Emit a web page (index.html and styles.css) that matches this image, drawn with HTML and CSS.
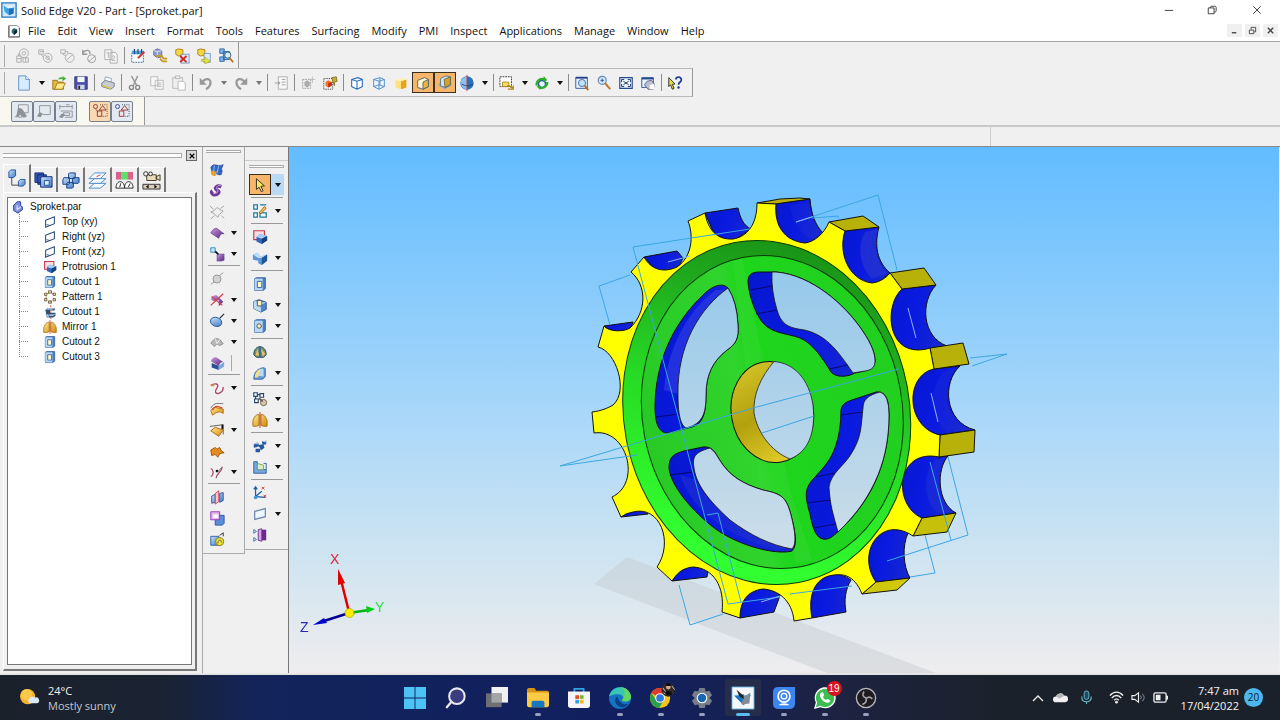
FILE: index.html
```html
<!DOCTYPE html>
<html lang="en">
<head>
<meta charset="utf-8">
<title>Solid Edge V20 - Part - [Sproket.par]</title>
<link rel="stylesheet" href="styles.css">
</head>
<body>
<svg class="defs" aria-hidden="true">
<defs>
<linearGradient id="lb" x2="1" y2="1"><stop offset="0" stop-color="#cfe6fb"/><stop offset="1" stop-color="#3f78c4"/></linearGradient>
<linearGradient id="gd" x2="1" y2="1"><stop offset="0" stop-color="#ffe98a"/><stop offset="1" stop-color="#d08a10"/></linearGradient>
<linearGradient id="pu" x2="1" y2="1"><stop offset="0" stop-color="#c99be0"/><stop offset="1" stop-color="#54217a"/></linearGradient>
</defs>
<symbol id="app" viewBox="0 0 18 18"><rect x="1" y="1" width="16" height="16" fill="#cfe8fb" stroke="#2b7cc0" stroke-width="1.5"/><path d="M3 4l5 3 7-1-1 7-5 2-5-4z" fill="#3fa4e6"/><path d="M3 4l5 3 7-1-4-2-3 1z" fill="#eaf6ff"/><path d="M9 8v7l5-2V7z" fill="#1f6fb8"/></symbol>
<symbol id="doc" viewBox="0 0 18 18"><path d="M3 2h10l3 3v11H3z" fill="#fff" stroke="#777"/><path d="M2 2v15h14V5" fill="none" stroke="#555"/><path d="M6 8l3-3 4 2v4l-4 3-3-3z" fill="#2a6a6a"/><path d="M9 9v5l4-3V7z" fill="#123"/></symbol>
<symbol id="g1" viewBox="0 0 18 18"><g fill="none" stroke="#aaa"><circle cx="10" cy="6" r="5"/><circle cx="10" cy="6" r="2"/><path d="M2 16V9h5v7zM9 16v-5h6v5zM4 9V6M2 12h5M12 11v5"/></g></symbol>
<symbol id="g2" viewBox="0 0 18 18"><g fill="none" stroke="#aaa"><circle cx="12" cy="11" r="5"/><circle cx="12" cy="11" r="2"/><path d="M2 2h5v5H2zM4 7l3 3M3 4h5M9 8l6 6"/></g></symbol>
<symbol id="g3" viewBox="0 0 18 18"><g fill="none" stroke="#aaa"><circle cx="12" cy="11" r="5"/><path d="M2 2h5v4H2zM4 7l4 2M8 14l8-7M7 4h3v2"/></g></symbol>
<symbol id="g4" viewBox="0 0 18 18"><g fill="none" stroke="#999"><circle cx="12" cy="12" r="4.5"/><path d="M9 15l7-6"/><path d="M2 2v5h5M2 6c3-5 9-4 8 1" stroke-width="1.5"/></g></symbol>
<symbol id="g5" viewBox="0 0 18 18"><g fill="#f6f6f6" stroke="#aaa"><path d="M2 2h8v11H2zM8 5h6l2 2v10H8z"/><path d="M4 6l2-1v6M10 10c3-3 5 0 0 4h4" fill="none"/></g></symbol>
<symbol id="sel" viewBox="0 0 18 18"><path d="M2 6h13v10H2z" fill="#fff" stroke="#2a5e96" stroke-dasharray="2 1"/><path d="M2 3h13v4H2z" fill="#58a6dc"/><path d="M5 1v6M9 1v6M13 1v6" stroke="#184a80" stroke-width="1.3"/><path d="M8 11l7-8 2 2-7 7z" fill="#c43d3d"/></symbol>
<symbol id="p1" viewBox="0 0 18 18"><path d="M2 3l4-2 5 2v7l-5 1-4-3z" fill="#8f9ccc" stroke="#5b669c"/><path d="M6 4v7M2 3l4 1 5-1" stroke="#e3e8ff" fill="none"/><path d="M5 9h6l2 3h4M9 12l3 3h5" fill="none" stroke="#c49a22" stroke-width="2"/></symbol>
<symbol id="p2" viewBox="0 0 18 18"><path d="M2 2l3-1 5 1v6l-5 1-3-2z" fill="#f5d83e" stroke="#a77a12"/><rect x="8" y="7" width="9" height="10" fill="#dceafa" stroke="#7796bc"/><path d="M7 9l7 7m0-7l-7 7" stroke="#d4281b" stroke-width="2"/></symbol>
<symbol id="p3" viewBox="0 0 18 18"><path d="M2 2l3-1 5 1v6l-5 1-3-2z" fill="#f5d83e" stroke="#a77a12"/><rect x="9" y="6" width="7" height="10" fill="#dceafa" stroke="#7796bc"/><path d="M6 13h4v-3l6 5-6 3v-3H6z" fill="#e4e43e" stroke="#aaa322" stroke-width=".7"/></symbol>
<symbol id="p4" viewBox="0 0 18 18"><path d="M2 1h5v5H2zM2 10h5v5H2zM6 4h7v9H6z" fill="#7fb3e8" stroke="#2c65ac"/><circle cx="11" cy="8" r="3.5" fill="#d8ecff" stroke="#356"/><path d="M13 11l4 5" stroke="#b27422" stroke-width="2"/></symbol>
<symbol id="new" viewBox="0 0 18 18"><path d="M3 1h8l4 4v12H3z" fill="#d9ecff" stroke="#5b8cc4"/><path d="M11 1v4h4" fill="#fff" stroke="#5b8cc4"/></symbol>
<symbol id="open" viewBox="0 0 18 18"><path d="M2 6h5l1 2h6v8H2z" fill="#e5b93c" stroke="#9a7414"/><path d="M4 16l3-7h9l-3 7z" fill="#ffe98a" stroke="#a07a1a"/><path d="M8 5c1-3 4-3 5-2V1l4 3-4 3V5c-2-1-3 0-5 0z" fill="#3fb02f"/></symbol>
<symbol id="save" viewBox="0 0 18 18"><path d="M2 2h14v14H3l-1-1z" fill="#4b4da8" stroke="#33347b"/><path d="M5 2h8v6H5z" fill="#f2f6ff"/><path d="M5 11h8v5H5z" fill="#cfd6ea"/><path d="M6 12h2v4H6z" fill="#222"/></symbol>
<symbol id="print" viewBox="0 0 18 18"><path d="M6 2l7 2-1 5-7-2z" fill="#fff" stroke="#8fa4be"/><path d="M2 9l4-3 10 3v4l-4 3-10-3z" fill="#c7ccd4" stroke="#73787f"/><path d="M3 12l9 3" stroke="#e3c53d" stroke-width="1.5"/></symbol>
<symbol id="cut" viewBox="0 0 18 18"><path d="M5 1l6 11M12 1L7 12" stroke="#999" stroke-width="1.6"/><circle cx="5" cy="14" r="2.3" fill="none" stroke="#888" stroke-width="1.5"/><circle cx="12" cy="14" r="2.3" fill="none" stroke="#888" stroke-width="1.5"/></symbol>
<symbol id="copy" viewBox="0 0 18 18"><g fill="#f8f8f8" stroke="#b5b5b5"><path d="M2 2h8v10H2zM7 6h9v10H7z"/><path d="M9 9h5M9 11h5M9 13h5"/></g></symbol>
<symbol id="paste" viewBox="0 0 18 18"><g fill="#efefef" stroke="#b5b5b5"><path d="M2 3h11v12H2z"/><path d="M5 1h5v3H5z"/><path d="M8 7h6l2 2v8H8z" fill="#fff"/></g></symbol>
<symbol id="undo" viewBox="0 0 18 18"><path d="M5 8C8 3 15 4 14 9c0 3-2 5-5 7" fill="none" stroke="#999" stroke-width="2.6"/><path d="M2 3v8h8z" fill="#999"/></symbol>
<symbol id="redo" viewBox="0 0 18 18"><path d="M13 8C10 3 3 4 4 9c0 3 2 5 5 7" fill="none" stroke="#999" stroke-width="2.6"/><path d="M16 3v8H8z" fill="#999"/></symbol>
<symbol id="ins" viewBox="0 0 18 18"><path d="M6 2h10v14H6z" fill="#f7f7f7" stroke="#aaa"/><path d="M2 9h6M6 7l2 2-2 2M10 5h4M10 8h4M10 11h4" stroke="#999" fill="none"/></symbol>
<symbol id="gs" viewBox="0 0 18 18"><path d="M3 5h9v10H3z" fill="none" stroke="#999" stroke-dasharray="2 1"/><path d="M5 8l3-2 3 2v4l-3 2-3-2z" fill="#aaa"/><path d="M14 2v7M11 5h6" stroke="#bbb"/></symbol>
<symbol id="os" viewBox="0 0 18 18"><path d="M2 4h10v12H2z" fill="none" stroke="#222" stroke-dasharray="1 1"/><path d="M4 8l3-2 4 2v4l-4 2-3-2z" fill="#f07a1c"/><path d="M7 14V9l4-1v4z" fill="#c22b1b"/><path d="M11 3l5-1 1 5-3 1v4l-2-5z" fill="#c7ae30" stroke="#847420"/></symbol>
<symbol id="wire" viewBox="0 0 18 18"><path d="M3 5l7-2 5 2v8l-6 3-6-3zM3 5l6 2 6-2M9 7v9" fill="#fff" stroke="#2c6fbb" stroke-width="1.2"/></symbol>
<symbol id="wire2" viewBox="0 0 18 18"><path d="M3 5l7-2 5 2v8l-6 3-6-3zM3 5l6 2 6-2M9 7v9M3 13l6-2 6 2M10 3v8" fill="#eef6ff" stroke="#4186cb"/></symbol>
<symbol id="shade" viewBox="0 0 18 18"><path d="M3 6l8-3 4 2v9l-6 2-6-2z" fill="#ffe27c"/><path d="M9 7l6-2v9l-6 2z" fill="#e6a61c"/><path d="M3 6l8-3 4 2-6 2z" fill="#fff2b8"/></symbol>
<symbol id="sedge" viewBox="0 0 18 18"><path d="M3 6l8-3 4 2v8l-6 3-6-2z" fill="#fff7cf" stroke="#4f6175"/><path d="M9 8l6-3v8l-6 3z" fill="#e8b838" stroke="#4f6175"/></symbol>
<symbol id="floor" viewBox="0 0 18 18"><path d="M2 12l7 4 7-4v-3H2z" fill="#9aa9b8"/><path d="M4 4l6-3 5 1v9l-6 3-5-2z" fill="#d6e6ee" stroke="#53708c"/><path d="M8 5l7-3v9l-6 3z" fill="#dba01e" stroke="#5a6a50"/></symbol>
<symbol id="ball" viewBox="0 0 18 18"><circle cx="9" cy="9" r="7.500" fill="#2f6fb5"/><path d="M9 2v14a7 7 0 010-14z" fill="#8ec2ee"/><path d="M3 10c4 3 9 3 13 0" fill="none" stroke="#123e77"/><path d="M9 0v18" stroke="#cc3131"/></symbol>
<symbol id="sketchv" viewBox="0 0 18 18"><path d="M1 2h13v11H1z" fill="#fff" stroke="#222" stroke-dasharray="2 1"/><path d="M4 8h7v5H4z" fill="#ffe063" stroke="#a88212"/><path d="M9 13c3-4 4 4 7 0v3h-6" fill="none" stroke="#b08412" stroke-width="1.4"/></symbol>
<symbol id="rot" viewBox="0 0 18 18"><circle cx="9" cy="10" r="4" fill="#e6f1ff" stroke="#2c5fa0" stroke-width="1.8"/><path d="M3 12C2 6 8 3 12 5M15 8c0 5-5 8-9 6" fill="none" stroke="#2fae2a" stroke-width="2.4"/><path d="M11 1l4 5-5 2zM7 11v6l-4-4z" fill="#2fae2a"/></symbol>
<symbol id="zarea" viewBox="0 0 18 18"><path d="M2 3h13v12H2z" fill="#eaf3ff" stroke="#2a4f8f"/><path d="M2 3h13" stroke="#1d3f86" stroke-width="2"/><circle cx="9" cy="9" r="4" fill="#c3e2fb" stroke="#37679b"/><path d="M12 12l4 5" stroke="#c06a1c" stroke-width="2"/></symbol>
<symbol id="zoomi" viewBox="0 0 18 18"><circle cx="7" cy="6" r="4.500" fill="#d6e9fb" stroke="#6388b4" stroke-width="1.3"/><path d="M5 6h4M7 4v4" stroke="#2a4f8f"/><path d="M10 9l6 7" stroke="#c4762c" stroke-width="2.200"/></symbol>
<symbol id="fit" viewBox="0 0 18 18"><path d="M2 3h14v12H2z" fill="#eef5ff" stroke="#244b8c" stroke-width="1.3"/><path d="M6 7l6 4M12 7l-6 4M4 8V5h3M11 5h3v3M14 10v3h-3M7 13H4v-3" fill="none" stroke="#122b5a"/></symbol>
<symbol id="pan" viewBox="0 0 18 18"><path d="M2 3h13v11H2z" fill="#eaf3ff" stroke="#244b8c"/><path d="M2 4h13" stroke="#244b8c" stroke-width="2"/><path d="M5 11l3-4 5-1 3 4-1 6H9z" fill="#b9c0d4" stroke="#5a627c"/><path d="M11 11l5-1v6h-5z" fill="#fff"/></symbol>
<symbol id="help" viewBox="0 0 18 18"><path d="M2 3l7 7-3 .5L8 15l-2 1-2-5-2 2z" fill="#e5de3c" stroke="#222"/><path d="M10 5c0-4 7-3 6 1 0 2-3 2-3 5" fill="none" stroke="#1d3f9c" stroke-width="2"/><circle cx="13" cy="14" r="1.400" fill="#1d3f9c"/></symbol>
<symbol id="r1" viewBox="0 0 18 18"><path d="M5 2h11v9H9v5H5z" fill="#e9ecef" stroke="#8a8f94"/><path d="M1 16l5-5M5 6l4 1 5 8-3 1-4-3-4 3z" fill="#8d9297" stroke="#8d9297"/></symbol>
<symbol id="r2" viewBox="0 0 18 18"><path d="M4 3h12v10H8" fill="none" stroke="#8a8f94"/><path d="M4 3v8" stroke="#8a8f94"/><path d="M1 15l3-5 4 2-3 4z" fill="#8d9297"/></symbol>
<symbol id="r3" viewBox="0 0 18 18"><path d="M2 2v5M2 4h14M16 2v5M9 2h4M3 9h13v7H8M6 11h7v3H6z" fill="none" stroke="#8a8f94"/><path d="M1 16l3-4 4 1-3 4z" fill="#8d9297"/></symbol>
<symbol id="r4" viewBox="0 0 18 18"><g fill="none" stroke="#8a3426"><circle cx="4" cy="4" r="2.300"/><path d="M8 8l4-5 4 5zM6 9h5v6H6zM4 7l3 3"/></g><path d="M9 2h8v13H12" fill="none" stroke="#5a3020" stroke-dasharray="1 1.500"/></symbol>
<symbol id="r5" viewBox="0 0 18 18"><g fill="none" stroke="#2a4590"><circle cx="4" cy="4" r="2.300"/><path d="M8 8l4-5 4 5z" stroke="#8a3426"/><path d="M6 9h5v6H6z" stroke="#b42a2a"/></g><path d="M9 2h8v13H12" fill="none" stroke="#234" stroke-dasharray="1 1.500"/></symbol>
<!-- pathfinder tabs -->
<symbol id="t1" viewBox="0 0 20 20"><path d="M5 9v8h7" fill="none" stroke="#444"/><path d="M2 3l2-2h5v6l-2 2H2z" fill="url(#lb)" stroke="#24569c"/><path d="M12 13l2-2h5v5l-2 2h-5z" fill="url(#lb)" stroke="#24569c"/></symbol>
<symbol id="t2" viewBox="0 0 20 20"><path d="M1 2h9v10H1zM4 4h9v10H4z" fill="#2f57b4" stroke="#152e74"/><path d="M7 7l2-1h10v11H7z" fill="url(#lb)" stroke="#152e74"/><path d="M11 10h5v5h-5z" fill="#dcecff" stroke="#24569c"/></symbol>
<symbol id="t3" viewBox="0 0 20 20"><path d="M8 3l1-1h6v5l-1 1H8zM2 9l1-2h6v6l-1 1H2zM12 8l1-1h6v5l-1 1h-6zM6 13l1-1h6v5l-1 1H6z" fill="url(#lb)" stroke="#173f88"/></symbol>
<symbol id="t4" viewBox="0 0 20 20"><g fill="#f4faff" stroke="#4a8cc8"><path d="M1 18l6-5h12l-6 5z"/><path d="M1 13l6-5h12l-6 5z"/><path d="M1 8l6-6h12l-6 6z"/></g><path d="M9 6l4-2" stroke="#d33"/></symbol>
<symbol id="t5" viewBox="0 0 20 20"><path d="M1 1h6v8H1z" fill="#d8628e"/><path d="M7 1h6v8H7z" fill="#5ee06a"/><path d="M13 1h6v8h-6z" fill="#d8628e"/><path d="M1 18c0-9 9-9 9 0zM10 18c0-9 9-9 9 0z" fill="#fff" stroke="#222"/><path d="M5 17l1-4M14 17l2-4" stroke="#222"/></symbol>
<symbol id="t6" viewBox="0 0 20 20"><path d="M5 4h10v6H5zM15 6l4-2v6l-4-2z" fill="#e9dcbe" stroke="#433a22"/><circle cx="4" cy="3" r="2.300" fill="#eee" stroke="#333"/><circle cx="9" cy="3" r="2" fill="#eee" stroke="#333"/><path d="M1 14h18v5H1z" fill="#d7cdb8" stroke="#333"/><path d="M4 16.500l3-2v4zM16 16.500l-3-2v4z" fill="#111"/></symbol>
<!-- tree -->
<symbol id="part" viewBox="0 0 16 16"><path d="M3 6l4-4h4v4l2 2v3l-5 4-5-3z" fill="#7d8fe0" stroke="#1f3494"/><path d="M7 6v5l4-3" fill="none" stroke="#dfe6ff" stroke-width="1.300"/></symbol>
<symbol id="plane" viewBox="0 0 16 16"><path d="M3 6l10-4v8L3 14z" fill="#fff" stroke="#2d4d7d" stroke-width="1.200"/><path d="M4 11l4 1" stroke="#2d4d7d"/></symbol>
<symbol id="prot" viewBox="0 0 18 18"><path d="M2 2h12v10H2z" fill="#f5dfe5" stroke="#c33a4c" stroke-width="1.300"/><path d="M5 9l4-3 8 2v5l-6 4-6-3z" fill="#2f68b8"/><path d="M5 9l4-3 8 2-6 3z" fill="#a9d1f5"/><path d="M11 11l6-3v5l-6 4z" fill="#17427f"/></symbol>
<symbol id="cuto" viewBox="0 0 18 18"><path d="M3 3l2-1h10v12l-2 2H3z" fill="#4a83cc" stroke="#2a5a9f"/><path d="M3 3h9v13H3z" fill="#b9d8f4"/><path d="M6 6h5v7H6z" fill="#fff6c4" stroke="#2a5a9f"/></symbol>
<symbol id="patt" viewBox="0 0 18 18"><g fill="#f1e6cd" stroke="#5d4a2b"><path d="M7 1h4v3H7zM7 14h4v3H7zM2 4h3v3H2zM13 4h3v3h-3zM2 11h3v3H2zM13 11h3v3h-3z"/></g><path d="M5 5l3-1m3 0l3 2m0 4v2m-3 3H8m-4-4V8" stroke="#8a6a33"/></symbol>
<symbol id="cutr" viewBox="0 0 18 18"><path d="M10 0v18" stroke="#c33" stroke-dasharray="3 1"/><path d="M3 6l3-2h9v3H9v3h7v4l-3 2H5z" fill="#38506e"/><path d="M3 6l3-2h9l-3 2zM3 12h4l1 4H5zM8 12h8l-3 2H8z" fill="#9bbce0"/></symbol>
<symbol id="mirr" viewBox="0 0 18 18"><path d="M8 3c-3-1-6 3-7 7v6h4l3-1zM10 3c3-1 6 3 7 7v6h-4l-3-1z" fill="url(#gd)" stroke="#a86a12"/><path d="M9 0v18" stroke="#c33"/></symbol>
<!-- surfacing -->
<symbol id="s1" viewBox="0 0 18 18"><path d="M2 6c4-6 6 0 14-3l-2 5c2 3 0 3 0 6-5 2-5-3-10 0z" fill="#2f67c9" stroke="#14336f" stroke-width=".6"/><path d="M2 11c2-3 4 1 7-1l-2 6-4-1z" fill="#eb9a2c"/><path d="M6 4l-1 9M11 4l-2 9" stroke="#9cc4f6"/></symbol>
<symbol id="s2" viewBox="0 0 18 18"><path d="M14 4c-5-2-9 2-5 4 5 2 0 6-4 5-2-1-3-3-1-4" fill="none" stroke="#6d3a96" stroke-width="4"/><path d="M14 3c-4-1-6 1-5 4 3 2 0 5-4 5" fill="none" stroke="#d2a9e8"/></symbol>
<symbol id="s3" viewBox="0 0 18 18"><path d="M2 9c4-1 5-3 7-5 2 1 4 3 7 4-3 3-5 3-6 7-3-3-5-5-8-6zM1 2l4 4M17 2l-4 3M2 17l4-4M17 16l-3-3" fill="#efefef" stroke="#9a9a9a"/></symbol>
<symbol id="s4" viewBox="0 0 18 18"><path d="M2 9c2-4 5-6 7-5l8 6c-3-1-5 1-6 5z" fill="url(#pu)" stroke="#4a2070" stroke-width=".6"/></symbol>
<symbol id="s5" viewBox="0 0 18 18"><path d="M2 2h5v5H2z" fill="#c5e8fb" stroke="#2387c0"/><path d="M7 6l4 4" stroke="#111" stroke-width="2"/><path d="M9 10l3-1h5v7l-3 1H9z" fill="url(#pu)" stroke="#6a4090" stroke-width=".6"/></symbol>
<symbol id="s6" viewBox="0 0 18 18"><circle cx="9" cy="9" r="4.500" fill="#d4d4d4" stroke="#919191"/><path d="M2 15l4-3M12 5l4-3" stroke="#919191"/></symbol>
<symbol id="s7" viewBox="0 0 18 18"><path d="M2 8c2-4 4-5 7-4l7 7-5 5z" fill="url(#pu)"/><path d="M2 11l9 7V9z" fill="#f0f0f0"/><path d="M2 15L16 2M3 5l12 10" stroke="#d33a4a" stroke-width="1.300"/></symbol>
<symbol id="s8" viewBox="0 0 18 18"><ellipse cx="8" cy="10" rx="6.500" ry="5" transform="rotate(20 8 10)" fill="url(#lb)" stroke="#265a9c"/><path d="M12 6l5-5" stroke="#234" stroke-width="1.400"/></symbol>
<symbol id="s9" viewBox="0 0 18 18"><path d="M2 10l5-5 5 1 4 5-4 2-3-2-3 3z" fill="#b9b9b9" stroke="#878787"/><path d="M7 5l2 6M12 6l-3 5" stroke="#eee"/></symbol>
<symbol id="s10" viewBox="0 0 18 18"><path d="M3 9l8 3v5l-8-3z" fill="#2a5294"/><path d="M11 12l6-4v5l-6 4z" fill="#77a9e2"/><path d="M2 7c2-4 4-5 7-4l7 5c-2 0-4 1-5 4z" fill="url(#pu)"/></symbol>
<symbol id="s11" viewBox="0 0 18 18"><path d="M2 6c5-3 10-2 7 3-3 4-2 7 2 6 4-1 5-5 5-7" fill="none" stroke="#a8496a" stroke-width="1.500"/><path d="M2 6h4" stroke="#e58a2d" stroke-width="2"/></symbol>
<symbol id="s12" viewBox="0 0 18 18"><path d="M2 11c4-7 7-2 14-2v5c-4-3-7-2-12 2z" fill="url(#gd)" stroke="#b96a12"/><path d="M2 8c4-7 8-5 14-5" fill="none" stroke="#666"/><path d="M4 10c3-6 7-4 11-2" fill="none" stroke="#d94b1d" stroke-width="1.500"/></symbol>
<symbol id="s13" viewBox="0 0 18 18"><path d="M1 5l15-2v11" fill="none" stroke="#555"/><path d="M2 10l5-4 9 3-5 7z" fill="url(#gd)" stroke="#b05c0c"/><path d="M15 3v5" stroke="#111" stroke-width="2"/></symbol>
<symbol id="s14" viewBox="0 0 18 18"><path d="M2 8l5-3 2 2 3-2 2 4 3 2-5 1-2 4-3-3-4 1z" fill="#e6891f" stroke="#94530e"/></symbol>
<symbol id="s15" viewBox="0 0 18 18"><path d="M2 14c4-2 3-8 0-9M8 16c0-6 6-5 7-13" fill="none" stroke="#a0435e" stroke-width="1.300"/><circle cx="9" cy="8" r="1.500" fill="#111"/><path d="M10 9l4-5" stroke="#666"/></symbol>
<symbol id="s16" viewBox="0 0 18 18"><path d="M3 8l4-2v9l-4 1zM12 5l4-1v9l-4 2z" fill="url(#lb)" stroke="#2a5a9f"/><path d="M7 5l4-3v12l-4 3z" fill="#f6c6ce" stroke="#c33a4c"/></symbol>
<symbol id="s17" viewBox="0 0 18 18"><path d="M7 6h10v9l-2 2H7z" fill="#5a8fe0" stroke="#2a4f9f"/><path d="M2 2h10v9H2z" fill="#e4b9ee" stroke="#8a2fb4"/><path d="M5 5h5v4H5z" fill="#fff"/></symbol>
<symbol id="s18" viewBox="0 0 18 18"><path d="M2 6h9v10H2z" fill="url(#lb)" stroke="#265a9c"/><circle cx="12" cy="12" r="4.500" fill="#efe43a" stroke="#7d7410"/><path d="M10 14c0-5 4-5 4-1" fill="none" stroke="#555"/><path d="M12 5l4-3v4" fill="none" stroke="#222"/></symbol>
<!-- features -->
<symbol id="arrow" viewBox="0 0 18 18"><path d="M5 2l9 8-4 .5 2.500 5-2 1-2.500-5L5 14z" fill="#f2ea5a" stroke="#222"/></symbol>
<symbol id="f1" viewBox="0 0 18 18"><path d="M2 2h4v5H2zM2 11h4v5H2zM9 11h7v5H9zM9 2h7" fill="#fff" stroke="#1a7a9c" stroke-width="1.400"/><path d="M8 11l6-7 2 2-6 6z" fill="#f0c43e" stroke="#8d3a2a" stroke-width=".8"/></symbol>
<symbol id="f2" viewBox="0 0 18 18"><path d="M1 5l6-2v4h4l6-2v7l-6 5-4-2v-3l-6-1z" fill="#5f97d8"/><path d="M1 5l6-2 3 4h1l6-2-6 4H7z" fill="#bcdcf7"/><path d="M11 9l6-4v7l-6 5z" fill="#22559c"/></symbol>
<symbol id="f3" viewBox="0 0 18 18"><path d="M2 5l6-2 8 3v8l-6 3-8-4z" fill="#4f88ca" stroke="#28568f"/><path d="M2 5l3-1 1 5 4 2 1-5 5 0-6 3v8l-8-4z" fill="#bcdaf3"/><path d="M6 4h5v6H6z" fill="#fff4bb" stroke="#556"/></symbol>
<symbol id="f4" viewBox="0 0 18 18"><path d="M3 3l2-1h10v12l-2 2H3z" fill="#4a83cc" stroke="#2a5a9f"/><path d="M3 3h9v13H3z" fill="#b9d8f4"/><circle cx="8" cy="9" r="2.500" fill="#fff2a6" stroke="#446"/></symbol>
<symbol id="f5" viewBox="0 0 18 18"><path d="M2 12C2 0 16 0 16 12l-3 3H5z" fill="#6f8d7c" stroke="#26404d"/><path d="M6 5l-2 8h4zM10 5l2 9 3-3z" fill="#e4c65a"/><path d="M9 3v12" stroke="#225f9f" stroke-width="1.500"/></symbol>
<symbol id="f6" viewBox="0 0 18 18"><path d="M2 16c0-8 4-12 11-13l2 1v9l-3 3z" fill="#5f97d8" stroke="#3d6ba8"/><path d="M4 12c1-5 4-7 8-8l1 1v8z" fill="#b9d8f4"/><path d="M3 14c1-6 3-8 7-10-2 3-3 6-3 10z" fill="#f9df76"/></symbol>
<symbol id="f7" viewBox="0 0 18 18"><path d="M2 2h4v4H2zM9 3h4v4H9zM3 9h4v4H3zM4 6v3M6 4h3" fill="#fff" stroke="#27466e" stroke-width="1.300"/><circle cx="13" cy="13" r="3.500" fill="#d8c7a8" stroke="#6b5a48"/><path d="M8 8l4 4" stroke="#6b5a48" stroke-width="2"/></symbol>
<symbol id="f9" viewBox="0 0 18 18"><path d="M2 7l4-2 2 2-2 3-4 1zM8 9l5-2 1 4-4 3zM11 4l5-1v4l-4 1zM4 12h5v4H4z" fill="#28579f"/><path d="M2 7l4-2 2 2zM11 4l5-1-1 2zM8 9l5-2v2z" fill="#9cc8f3"/><path d="M7 9l6-1" stroke="#28579f" stroke-width="2"/></symbol>
<symbol id="f10" viewBox="0 0 18 18"><path d="M2 3h4v9h10v4H2z" fill="#76a9e3" stroke="#2a5a9f"/><path d="M6 5l7 2v5H6z" fill="#d5edc4" stroke="#7aa35a"/><path d="M13 5h3v7" fill="none" stroke="#2a5a9f"/></symbol>
<symbol id="f11" viewBox="0 0 18 18"><path d="M4 15V3M4 13l11 1M4 13l7-6M2 5l2-3 2 3" fill="none" stroke="#1f5da8" stroke-width="1.400"/><path d="M11 2l3 3m0-3l-3 3M13 11l3 3m0-3l-3 3" stroke="#c33"/><circle cx="4" cy="14" r="2" fill="#3c9adf"/></symbol>
<symbol id="f12" viewBox="0 0 18 18"><path d="M3 6l12-3v9L3 15z" fill="#eef6ff" stroke="#6a88ad" stroke-width="1.400"/></symbol>
<symbol id="f13" viewBox="0 0 18 18"><path d="M7 3l4-1v14l-4-1z" fill="#d9a6ea" stroke="#6a2a8c"/><path d="M11 3h5v12h-5z" fill="#6a2a8c"/><path d="M2 3l3 2-3 2zM2 12l3 2-3 2z" fill="#fff" stroke="#1a6a8c"/></symbol>
</svg>

<div class="window">
<header class="titlebar">
  <svg class="i16"><use href="#app"/></svg><h1 class="title">Solid Edge V20 - Part - [Sproket.par]</h1>
  <div class="winctl">
    <button aria-label="Minimize"><svg viewBox="0 0 12 12"><path d="M1 6.500h10" stroke="#222"/></svg></button>
    <button aria-label="Restore"><svg viewBox="0 0 12 12"><path d="M1.500 3.500h7v7h-7zM4 3.500c0-2 1-2 2-2h3c2 0 2 1 2 2v3c0 1 0 2-2 2" fill="none" stroke="#222"/></svg></button>
    <button aria-label="Close"><svg viewBox="0 0 12 12"><path d="M1.500 1.500l9 9M10.500 1.500l-9 9" stroke="#222"/></svg></button>
  </div>
</header>
<nav class="menubar">
  <svg class="i14"><use href="#doc"/></svg>
  <button>File</button><button>Edit</button><button>View</button><button>Insert</button><button>Format</button><button>Tools</button><button>Features</button><button>Surfacing</button><button>Modify</button><button>PMI</button><button>Inspect</button><button>Applications</button><button>Manage</button><button>Window</button><button>Help</button>
  <div class="mdictl">
    <button aria-label="Minimize document"><svg viewBox="0 0 10 10"><path d="M2 7.500h5" stroke="#444" stroke-width="1.500"/></svg></button>
    <button aria-label="Restore document"><svg viewBox="0 0 10 10"><path d="M1.500 4.500h5v4h-5zM3.500 4V1.500h5v5H7" fill="none" stroke="#444"/></svg></button>
    <button aria-label="Close document"><svg viewBox="0 0 10 10"><path d="M2 2l6 6M8 2l-6 6" stroke="#444" stroke-width="1.500"/></svg></button>
  </div>
</nav>

<div class="bars">
<div class="bar bar-a">
  <button class="tb" aria-label="Assign"><svg><use href="#g1"/></svg></button><button class="tb" aria-label="Release"><svg><use href="#g2"/></svg></button><button class="tb" aria-label="Obsolete"><svg><use href="#g3"/></svg></button><button class="tb" aria-label="Revert"><svg><use href="#g4"/></svg></button><button class="tb" aria-label="Revisions"><svg><use href="#g5"/></svg></button><i class="sep"></i>
  <button class="tb" aria-label="Plan"><svg><use href="#sel"/></svg></button><button class="tb" aria-label="Check in"><svg><use href="#p1"/></svg></button><button class="tb" aria-label="Remove"><svg><use href="#p2"/></svg></button><button class="tb" aria-label="Send"><svg><use href="#p3"/></svg></button><button class="tb" aria-label="Find"><svg><use href="#p4"/></svg></button>
</div>
<div class="bar bar-b">
  <button class="tb" aria-label="New"><svg><use href="#new"/></svg></button><button class="dd" aria-label="New options"></button><button class="tb" aria-label="Open"><svg><use href="#open"/></svg></button><button class="tb" aria-label="Save"><svg><use href="#save"/></svg></button><i class="sep"></i>
  <button class="tb" aria-label="Print"><svg><use href="#print"/></svg></button><i class="sep"></i>
  <button class="tb" aria-label="Cut"><svg><use href="#cut"/></svg></button><button class="tb" aria-label="Copy"><svg><use href="#copy"/></svg></button><button class="tb" aria-label="Paste"><svg><use href="#paste"/></svg></button><i class="sep"></i>
  <button class="tb" aria-label="Undo"><svg><use href="#undo"/></svg></button><button class="dd off" aria-label="Undo list"></button><button class="tb" aria-label="Redo"><svg><use href="#redo"/></svg></button><button class="dd off" aria-label="Redo list"></button><i class="sep"></i>
  <button class="tb" aria-label="Insert"><svg><use href="#ins"/></svg></button><i class="sep"></i>
  <button class="tb" aria-label="Activate"><svg><use href="#gs"/></svg></button><button class="tb" aria-label="Override"><svg><use href="#os"/></svg></button><i class="sep"></i>
  <button class="tb" aria-label="Wireframe"><svg><use href="#wire"/></svg></button><button class="tb" aria-label="Hidden edges"><svg><use href="#wire2"/></svg></button><button class="tb" aria-label="Shaded"><svg><use href="#shade"/></svg></button><button class="tb on" aria-label="Shaded with edges"><svg><use href="#sedge"/></svg></button><button class="tb on" aria-label="Drop shadow"><svg><use href="#floor"/></svg></button><button class="tb" aria-label="View style"><svg><use href="#ball"/></svg></button><button class="dd" aria-label="View styles"></button><i class="sep"></i>
  <button class="tb" aria-label="Sketch view"><svg><use href="#sketchv"/></svg></button><button class="dd" aria-label="Sketch views"></button><button class="tb" aria-label="Rotate"><svg><use href="#rot"/></svg></button><button class="dd" aria-label="Rotations"></button><i class="sep"></i>
  <button class="tb" aria-label="Zoom area"><svg><use href="#zarea"/></svg></button><button class="tb" aria-label="Zoom"><svg><use href="#zoomi"/></svg></button><button class="tb" aria-label="Fit"><svg><use href="#fit"/></svg></button><button class="tb" aria-label="Pan"><svg><use href="#pan"/></svg></button><i class="sep"></i>
  <button class="tb" aria-label="Context help"><svg><use href="#help"/></svg></button>
</div>
<div class="bar bar-c">
  <button class="tb box" aria-label="Select face"><svg><use href="#r1"/></svg></button><button class="tb box" aria-label="Select edge"><svg><use href="#r2"/></svg></button><button class="tb box" aria-label="Select dimension"><svg><use href="#r3"/></svg></button><i class="space"></i><button class="tb box hot" aria-label="Select inside"><svg><use href="#r4"/></svg></button><button class="tb box" aria-label="Select overlapping"><svg><use href="#r5"/></svg></button>
</div>
<div class="prompt"><i></i></div>
</div>

<main class="work">
<aside class="finder">
  <div class="grip-row"><span class="grip"></span><button aria-label="Close panel"><svg viewBox="0 0 8 8"><path d="M1 1l6 6M7 1l-6 6" stroke="#000" stroke-width="1.500"/></svg></button></div>
  <div class="tabs"><button class="cur" aria-label="PathFinder"><svg><use href="#t1"/></svg></button><button aria-label="Library"><svg><use href="#t2"/></svg></button><button aria-label="Family"><svg><use href="#t3"/></svg></button><button aria-label="Layers"><svg><use href="#t4"/></svg></button><button aria-label="Sensors"><svg><use href="#t5"/></svg></button><button aria-label="Playback"><svg><use href="#t6"/></svg></button></div>
  <div class="page"><div class="treebox">
    <div class="root"><svg><use href="#part"/></svg>Sproket.par</div>
    <ul>
      <li><svg><use href="#plane"/></svg>Top (xy)</li><li><svg><use href="#plane"/></svg>Right (yz)</li><li><svg><use href="#plane"/></svg>Front (xz)</li><li><svg><use href="#prot"/></svg>Protrusion 1</li><li><svg><use href="#cuto"/></svg>Cutout 1</li><li><svg><use href="#patt"/></svg>Pattern 1</li><li><svg><use href="#cutr"/></svg>Cutout 1</li><li><svg><use href="#mirr"/></svg>Mirror 1</li><li><svg><use href="#cuto"/></svg>Cutout 2</li><li><svg><use href="#cuto"/></svg>Cutout 3</li>
    </ul>
  </div></div>
</aside>
<div class="tools">
<div class="col col-1">
  <span class="vgrip"></span>
  <div><button class="tb" aria-label="BlueSurf"><svg><use href="#s1"/></svg></button></div>
  <div><button class="tb" aria-label="Swept surface"><svg><use href="#s2"/></svg></button></div>
  <div><button class="tb" aria-label="Bounded surface"><svg><use href="#s3"/></svg></button></div>
  <div><button class="tb" aria-label="Extruded surface"><svg><use href="#s4"/></svg></button><button class="dd" aria-label="More surfaces"></button></div>
  <div><button class="tb" aria-label="Copy surface"><svg><use href="#s5"/></svg></button><button class="dd" aria-label="More copies"></button></div>
  <hr>
  <div><button class="tb" aria-label="Stitch"><svg><use href="#s6"/></svg></button></div>
  <div><button class="tb" aria-label="Trim"><svg><use href="#s7"/></svg></button><button class="dd" aria-label="More trims"></button></div>
  <div><button class="tb" aria-label="Split"><svg><use href="#s8"/></svg></button><button class="dd" aria-label="More splits"></button></div>
  <div><button class="tb" aria-label="Face"><svg><use href="#s9"/></svg></button><button class="dd" aria-label="More faces"></button></div>
  <div><button class="tb" aria-label="Replace face"><svg><use href="#s10"/></svg></button><i class="tick"></i></div>
  <hr>
  <div><button class="tb" aria-label="Curve"><svg><use href="#s11"/></svg></button><button class="dd" aria-label="More curves"></button></div>
  <div><button class="tb" aria-label="Project curve"><svg><use href="#s12"/></svg></button></div>
  <div><button class="tb" aria-label="Cross curve"><svg><use href="#s13"/></svg></button><button class="dd" aria-label="More cross curves"></button></div>
  <div><button class="tb" aria-label="Contour"><svg><use href="#s14"/></svg></button></div>
  <div><button class="tb" aria-label="Intersection"><svg><use href="#s15"/></svg></button><button class="dd" aria-label="More intersections"></button></div>
  <hr>
  <div><button class="tb" aria-label="Parting split"><svg><use href="#s16"/></svg></button></div>
  <div><button class="tb" aria-label="Boolean"><svg><use href="#s17"/></svg></button></div>
  <div><button class="tb" aria-label="Part copy"><svg><use href="#s18"/></svg></button></div>
</div>
<div class="col col-2">
  <span class="vgrip"></span>
  <div><button class="tb on" aria-label="Select"><svg><use href="#arrow"/></svg></button><button class="dd lit" aria-label="Select options"></button></div>
  <hr>
  <div><button class="tb" aria-label="Sketch"><svg><use href="#f1"/></svg></button><button class="dd" aria-label="More sketches"></button></div>
  <hr>
  <div><button class="tb" aria-label="Protrusion"><svg><use href="#prot"/></svg></button></div>
  <div><button class="tb" aria-label="Swept protrusion"><svg><use href="#f2"/></svg></button><button class="dd" aria-label="More protrusions"></button></div>
  <hr>
  <div><button class="tb" aria-label="Cutout"><svg><use href="#cuto"/></svg></button></div>
  <div><button class="tb" aria-label="Swept cutout"><svg><use href="#f3"/></svg></button><button class="dd" aria-label="More cutouts"></button></div>
  <div><button class="tb" aria-label="Hole"><svg><use href="#f4"/></svg></button><button class="dd" aria-label="More holes"></button></div>
  <hr>
  <div><button class="tb" aria-label="Draft"><svg><use href="#f5"/></svg></button></div>
  <div><button class="tb" aria-label="Round"><svg><use href="#f6"/></svg></button><button class="dd" aria-label="More rounds"></button></div>
  <hr>
  <div><button class="tb" aria-label="Pattern"><svg><use href="#f7"/></svg></button><button class="dd" aria-label="More patterns"></button></div>
  <div><button class="tb" aria-label="Mirror"><svg><use href="#mirr"/></svg></button><button class="dd" aria-label="More mirrors"></button></div>
  <hr>
  <div><button class="tb" aria-label="Rib"><svg><use href="#f9"/></svg></button><button class="dd" aria-label="More ribs"></button></div>
  <div><button class="tb" aria-label="Thin wall"><svg><use href="#f10"/></svg></button><button class="dd" aria-label="More thin walls"></button></div>
  <hr>
  <div><button class="tb" aria-label="Coordinate system"><svg><use href="#f11"/></svg></button></div>
  <div><button class="tb" aria-label="Reference plane"><svg><use href="#f12"/></svg></button><button class="dd" aria-label="More planes"></button></div>
  <div><button class="tb" aria-label="Live section"><svg><use href="#f13"/></svg></button></div>
</div>
</div>
<section class="view" aria-label="Part view">
<svg class="scene" viewBox="289 147 990 526" preserveAspectRatio="xMinYMax meet">
<defs>
<linearGradient id="hole" gradientUnits="userSpaceOnUse" x1="0" y1="147" x2="0" y2="673"><stop offset="0" stop-color="#7dc0ee"/><stop offset=".3" stop-color="#9ccbea"/><stop offset="1" stop-color="#e4e6e8"/></linearGradient>
<linearGradient id="ring" gradientUnits="userSpaceOnUse" x1="690" y1="540" x2="850" y2="270"><stop offset="0" stop-color="#32ff2f"/><stop offset=".45" stop-color="#27da24"/><stop offset=".8" stop-color="#20a81d"/><stop offset="1" stop-color="#199517"/></linearGradient>
<linearGradient id="face" gradientUnits="userSpaceOnUse" x1="640" y1="0" x2="905" y2="0"><stop offset="0" stop-color="#28c925"/><stop offset=".4" stop-color="#2fd42c"/><stop offset=".46" stop-color="#1ed61c"/><stop offset="1" stop-color="#22cf20"/></linearGradient>
<linearGradient id="blue" x2="1" y2=".2"><stop offset="0" stop-color="#0717cf"/><stop offset=".55" stop-color="#0a1ae0"/><stop offset="1" stop-color="#1526d2"/></linearGradient>
<linearGradient id="bore" gradientUnits="userSpaceOnUse" x1="740" y1="370" x2="770" y2="460"><stop offset="0" stop-color="#d0bf25"/><stop offset=".5" stop-color="#b3a00e"/><stop offset="1" stop-color="#dcc827"/></linearGradient>
</defs>
<path d="M594 584L627 557 936 673H827z" fill="#c4c8ce" opacity=".42"/>
<g fill="url(#blue)" stroke="#111" stroke-width="1" stroke-linejoin="round">
<path d="M775 204L810 199C811 213 815 225 823 233L805 246 780 240z"/>
<path d="M845 231L879 227C874 245 877 262 890 273L872 287C842 285 832 250 845 231z"/>
<path d="M902 289L936 285C920 302 922 337 947 346L930 349 918 353C880 352 876 302 902 289z"/>
<path d="M934 369L960 366C942 382 944 422 975 430L940 435C896 430 896 374 934 369z"/>
<path d="M939 457L948 456C936 470 937 503 956 513L922 518C882 506 888 446 939 457z"/>
<path d="M908 533C902 546 903 566 910 578L876 582C846 552 872 510 908 533z"/>
<path d="M851 580C845 590 844 601 846 612L812 618C798 580 826 562 851 580z"/>
<path d="M780 595C778 602 776 606 774 612L740 618C728 592 755 578 780 595z"/>
<path d="M708 571L707 577 672 581C674 562 696 556 708 571z"/><path d="M648 514L621 517C625 506 640 508 648 514z"/>
<path d="M604 326L633 322 630 330 612 334z"/><path d="M644 257L677 251 683 258 677 270 657 272z"/><path d="M705 213L738 208C740 218 744 226 751 229L733 241 716 238z"/>
</g>
<g fill="#2634d2" opacity=".75"><path d="M865 232C857 246 859 265 872 279L887 273C875 260 874 245 878 229z"/><path d="M790 205C792 220 800 235 814 240L822 234C814 225 810 214 809 202z" opacity=".4"/><path d="M943 372C928 394 930 415 946 432L970 430C943 420 941 385 956 368z" opacity=".4"/><path d="M935 460C922 474 923 500 937 513L953 512C937 501 936 471 945 458z" opacity=".6"/></g>
<g fill="#b8b10a" stroke="#111" stroke-linejoin="round">
<path d="M757 203L780 199 800 198 810 199 775 204z"/><path d="M829 222L863 216 879 227 845 231z"/><path d="M890 273L924 268 936 285 902 289z"/><path d="M930 348L963 343 969 364 934 369z"/><path d="M940 435L975 430 974 452 939 457z"/><path d="M922 518L956 513 947 532 913 536z" fill="#c7c00b"/><path d="M876 582L910 578 897 590 862 594z" fill="#cfc80c"/>
</g>
<path fill="#ff0" stroke="#111" stroke-linejoin="round" d="M757 203L776 204C774 225 784 241 805 243C814 242 824 234 829 222L845 231C838 252 848 280 872 283C880 282 886 278 890 273L902 289C885 304 886 350 918 350Q925 350 930 348L934 369C905 375 905 427 940 435L939 457C896 448 892 505 922 518L913 536C880 514 856 554 876 582L862 594C854 574 842 574 834 575C813 577 808 598 812 618L794 621C792 600 778 590 763 589C746 591 740 603 740 618L722 612C725 586 713 568 693 567C681 568 676 575 672 581L657 567C674 542 660 505 633 512Q626 513 621 517L612 497C642 483 627 428 594 433L592 412C601 411 608 408 613 405C629 391 616 351 598 347L604 326C609 332 624 332 630 328C647 312 647 285 631 272L644 257C651 270 664 273 677 267C692 257 694 236 688 221L705 213C708 230 717 240 733 239C746 237 757 226 757 203z"/>
<ellipse cx="766.700" cy="412.500" rx="142.900" ry="172.900" transform="rotate(-10.600 766.700 412.500)" fill="url(#ring)" stroke="#0a3a08"/>
<ellipse cx="772.300" cy="412" rx="130" ry="157.300" transform="rotate(-10.400 772.300 412)" fill="url(#face)" stroke="#0a3a08"/>
<path d="M733 262L742 258 790 490 812 560 795 563 788 505 760 488z" fill="#46dc42" opacity=".3"/>
<g fill="url(#blue)" stroke="#111" stroke-linejoin="round">
<path d="M728 288C722 282 712 286 703 295C675 322 656 358 655 405C655 420 657 433 668 433L692 427C703 424 706 413 706 395C706 374 713 361 727 350C736 344 739 338 738 325Q737 302 728 288z"/>
<path d="M748 282C748 275 751 272 760 272H776C812 275 845 305 862 330C873 346 875 355 875 361C874 370 868 370 855 373C848 377 836 378 831 372C822 357 812 343 800 338C787 333 772 334 762 322C755 312 749 296 748 282z"/>
<path d="M841 410C842 404 846 402 852 400L876 392C885 391 889 398 889 415C889 455 877 495 840 530C832 537 829 540 823 539C815 538 812 524 810 514C806 500 804 492 810 483C820 470 830 464 836 445Q841 430 841 410z"/>
<path d="M669 468C669 457 673 454 684 451L703 447C712 446 715 452 719 459C729 476 743 484 763 490C782 494 786 497 791 515C795 531 798 545 792 551C777 555 742 547 717 530C691 511 670 484 669 468z"/>
</g>
<path d="M716 290C690 308 668 345 664 390L678 394C678 352 694 318 726 290z" fill="#2a3ae0" opacity=".75"/>
<path d="M680 475C690 505 720 535 775 549L788 549C752 538 712 512 696 480z" fill="#2030d0" opacity=".6"/>
<g fill="url(#hole)" stroke="#111" stroke-width=".8">
<path d="M728 288C700 308 677 345 678 395C678 412 680 425 686 428C703 424 706 413 706 395C706 374 713 361 727 350C736 344 739 338 738 325Q737 302 728 288z"/>
<path d="M772 272Q771 290 777 310C781 324 788 327 798 329C825 332 837 350 853 373L865 371C873 370 875 366 875 361C875 355 873 346 862 330C845 305 812 275 776 272z"/>
<path d="M880 392C868 395 863 400 863 408C861 425 862 437 851 454C844 466 831 473 829 487C830 505 833 514 838 532C877 495 889 455 889 415Q889 394 880 392z"/>
<path d="M710 448C695 452 692 457 694 468C696 484 708 500 730 520C750 535 770 545 792 549C797 544 795 531 791 515C786 497 782 494 763 490C743 484 729 476 719 459Q715 451 710 448z"/>
</g>
<path d="M750 290L772 286M756 314L777 310M656 417L679 414M841 415L862 412M816 477L835 473M807 503L830 500M813 528L836 524M670 475L693 472M829 369L848 365" stroke="#05086c"/>
<ellipse cx="772.300" cy="412" rx="41" ry="50.800" transform="rotate(-10 772.300 412)" fill="url(#bore)" stroke="#111"/>
<path d="M774 361.500C760 378 753 395 754 413C757 431 770 451 790 459C808 452 816 433 813 405C809 379 794 363 774 361.500z" fill="url(#hole)" stroke="#222" stroke-width=".8"/>
<g fill="none" stroke="#3ca6e2">
<path d="M750 229L633 247 728 604 780 597M790 594L852 586M910 577L935 573 925 535M838 218V216L812 218"/>
<path d="M796 222L878 195 897 270M948 457L968 535 887 561M930 462L951 540"/>
<path d="M610 325L599 286 630 275M679 585L690 625 723 614M560 466L753 408L899 369M560 466L637 455M762 433L814 416M970 358L1007 354 972 366M707 515L718 513 741 602"/>
<path d="M908 308L916 338M931 393L938 422M796 222L812 217M668 262L690 256M761 602L780 596" stroke="#8bb5ff"/>
</g>
<g stroke-linecap="round"><path d="M349 612L341 580" stroke="#e00000" stroke-width="2.500"/><path d="M338 569l7 14-7 2z" fill="#e00000"/><path d="M349 613L369 610" stroke="#08b412" stroke-width="2.500"/><path d="M375 609l-9-3 1 7z" fill="#00cf18"/><path d="M349 613L324 621" stroke="#000090" stroke-width="2.500"/><path d="M313 625l11-7 3 5z" fill="#0000cc"/><circle cx="349.500" cy="613" r="4.500" fill="#ffed00" stroke="#a69a00" stroke-width=".6"/></g>
<g class="axis"><text x="330" y="564" fill="#e3233c">X</text><text x="375" y="612" fill="#25df45">Y</text><text x="300" y="632" fill="#2929b8">Z</text></g>
</svg>
</section>
</main>
</div>

<footer class="taskbar">
<button class="weather"><svg viewBox="0 0 22 20"><circle cx="9" cy="9" r="8" fill="#f6b12c"/><circle cx="8" cy="7" r="6" fill="#fbc84a"/><path d="M11 16a3 3 0 010-5 4 4 0 016-1 3 3 0 012 6z" fill="#dbe8f5"/></svg><span><b>24°C</b><em>Mostly sunny</em></span></button>
<div class="apps">
<button aria-label="Start"><svg viewBox="0 0 24 24"><path d="M0 0h11.500v11.500H0zM12.500 0H24v11.500H12.500zM0 12.500h11.500V24H0zM12.500 12.500H24V24H12.500z" fill="#4cc2f5"/></svg></button>
<button aria-label="Search"><svg viewBox="0 0 24 24"><circle cx="13" cy="10" r="8.500" fill="#3a3d80" stroke="#e8e8ee" stroke-width="2.200"/><path d="M7 16l-5 6" stroke="#e8e8ee" stroke-width="2.500" stroke-linecap="round"/></svg></button>
<button aria-label="Task view"><svg viewBox="0 0 24 24"><path d="M6 0h18v17H6z" fill="#f1f1f1"/><path d="M0 7h17v15H0z" fill="#6e6e75"/><path d="M6 7h11v10H6z" fill="#a5a5a8"/></svg></button>
<button class="run" aria-label="File Explorer"><svg viewBox="0 0 24 24"><path d="M0 3c0-1 1-2 2-2h6l2 3h12c1 0 2 1 2 2v5H0z" fill="#d99512"/><path d="M0 6h24v14c0 1-1 2-2 2H2c-1 0-2-1-2-2z" fill="#fbcb45"/><path d="M5 22v-5c0-1 1-2 2-2h10c1 0 2 1 2 2v5z" fill="#1777c2"/></svg></button>
<button aria-label="Store"><svg viewBox="0 0 24 24"><path d="M7 6V2h10v4" fill="none" stroke="#34a3dd" stroke-width="2"/><path d="M0 5h24v15c0 2-1 3-3 3H3c-2 0-3-1-3-3z" fill="#f4f4f6"/><path d="M8 9h4v4H8z" fill="#e64a2e"/><path d="M13 9h4v4h-4z" fill="#7ab82a"/><path d="M8 14h4v4H8z" fill="#2e9fdf"/><path d="M13 14h4v4h-4z" fill="#f7b920"/></svg></button>
<button class="run" aria-label="Edge"><svg viewBox="0 0 24 24"><circle cx="12" cy="12" r="12" fill="#1573c4"/><path d="M0 10C3-2 21-4 24 10c.5 5-5 7-9 5 3-4-2-8-6-7-4 0-8 2-9 2z" fill="#38c6b4"/><path d="M14 15c6 2 10-1 10-5C22 2 16 0 12 .500c6 2 7 6 2 14.500z" fill="#66d65d"/><path d="M9 10c-5 4-1 13 7 12 3-1 4-2 5-4-4 2-10 0-12-8z" fill="#0b3f86"/></svg></button>
<button class="run" aria-label="Chrome"><svg viewBox="0 0 24 24"><circle cx="11" cy="12" r="11" fill="#f4c522"/><path d="M11 12L1.500 6.500A11 11 0 0120.500 6.500L21 8H11z" fill="#e2392c"/><path d="M1.500 6.500A11 11 0 0010 23l5-8.500-8 0z" fill="#2da14a"/><circle cx="11" cy="12" r="5.300" fill="#fff"/><circle cx="11" cy="12" r="4.200" fill="#2a79e4"/><circle cx="20" cy="3" r="7.500" fill="#302b2c"/><circle cx="20" cy="0" r="2.600" fill="#d9a78c"/><path d="M17-2c1-3 5-3 6 0l-1 1h-4zM16 9l2-5 5 1 1 4z" fill="#0c0c0e"/><path d="M14 1l3 4M24-1l3 4M15 6l2 2" stroke="#d8d4d0"/></svg></button>
<button class="run" aria-label="Settings"><svg viewBox="0 0 24 24"><path d="M9 1h6l1 4 4-1 3 5-3 3 3 3-3 5-4-1-1 4H9l-1-4-4 1-3-5 3-3-3-3 3-5 4 1z" fill="#777e88"/><circle cx="12" cy="12" r="5.800" fill="#fff"/><circle cx="12" cy="12" r="4.600" fill="#1966b4"/></svg></button>
<button class="run cur" aria-label="Solid Edge"><svg viewBox="0 0 24 24"><path d="M0 0h24v24H0z" fill="#f5f9fc" stroke="#6ab4e4"/><path d="M2 9l19 0-8 11z" fill="#4ba4dd"/><path d="M3 10l10-2 0 12z" fill="#1c74c6"/><path d="M13 11l7-5-1 12-9 1z" fill="#858b92"/><path d="M5 3l7 6 1 4-5-3z" fill="#222"/></svg></button>
<button class="run" aria-label="Camera"><svg viewBox="0 0 24 24"><path d="M0 6c0-4 2-6 6-6h18v18c0 4-2 6-6 6H6c-4 0-6-2-6-6z" fill="#3c86f2"/><circle cx="12" cy="10" r="6.500" fill="none" stroke="#fff" stroke-width="1.800"/><circle cx="12" cy="10" r="3" fill="none" stroke="#fff" stroke-width="1.500"/><path d="M6 20c2-3 10-3 12 0z" fill="#fff"/></svg></button>
<button class="run" aria-label="WhatsApp"><svg viewBox="0 0 24 24"><path d="M0 24l2-7A11.500 11.500 0 117 22z" fill="#fff"/><path d="M2 22l1.500-5A10 10 0 117 20.500z" fill="#3cbd50"/><path d="M8 6c-3 2-1 7 3 10 4 2 6 1 7-1l-3-2-2 1c-2-1-3-2-3-4l1-1-1-3z" fill="#fff"/></svg><b class="badge">19</b></button>
<button class="run" aria-label="OBS Studio"><svg viewBox="0 0 24 24"><circle cx="12" cy="12" r="10.500" fill="#1d1d21" stroke="#b8b8bc" stroke-width="1.500"/><path d="M10 5c-3 3-1 6 2 7M19 13c-3-3-6-2-7 0M8 19c4-1 5-4 4-7" fill="none" stroke="#a5a5aa" stroke-width="1.800"/></svg></button>
</div>
<div class="tray">
<button class="chev" aria-label="Show hidden icons"><svg viewBox="0 0 12 12"><path d="M1 9l5-5 5 5" fill="none" stroke="#eee" stroke-width="1.300"/></svg></button>
<button aria-label="OneDrive"><svg viewBox="0 0 16 16"><path d="M3 13a3 3 0 010-6 5 5 0 019-1 3.500 3.500 0 011 7z" fill="#f0f0f0"/><path d="M3 7a5 5 0 019-1L7 9z" fill="#b4b4b6"/></svg></button>
<button class="mic" aria-label="Microphone"><svg viewBox="0 0 16 16"><rect x="5.500" y="1" width="5" height="9" rx="2.500" fill="#1e4b60" stroke="#6cb8cc"/><path d="M3 7v1c0 6 10 6 10 0V7M8 12v3" fill="none" stroke="#6cb8cc" stroke-width="1.200"/></svg></button>
<button class="status" aria-label="Network, volume and battery"><svg viewBox="0 0 16 16"><path d="M1 6c4-5 10-5 14 0M3 8.500c3-3.500 7-3.500 10 0M5.500 11c2-2 3-2 5 0" fill="none" stroke="#eee" stroke-width="1.500"/><circle cx="8" cy="13" r="1.500" fill="#eee"/></svg><svg viewBox="0 0 16 16"><path d="M1 6h3l4-3v10l-4-3H1z" fill="none" stroke="#eee" stroke-width="1.200"/><path d="M10 6q2 2 0 4M12 4q4 4 0 8" fill="none" stroke="#778" stroke-width="1.100"/></svg><svg viewBox="0 0 16 16"><rect x="1" y="3" width="13" height="10" rx="1.500" fill="none" stroke="#eee" stroke-width="1.400"/><path d="M3 5h5v6H3zM14 6h2v4h-2z" fill="#eee"/></svg></button>
<button class="clock"><time>7:47 am</time><time>17/04/2022</time></button><span class="count">20</span>
</div>
</footer>
</body>
</html>
```
FILE: styles.css
```css
* { box-sizing: border-box; }
body { margin: 0; height: 100vh; display: flex; flex-direction: column; overflow: hidden; background: #f0f0f0; color: #111; font: 11px/15px "Open Sans", "Noto Sans", sans-serif; }
button { margin: 0; padding: 0; border: 0; background: none; color: inherit; font: inherit; }
svg { display: block; flex: none; overflow: visible; }
h1, ul { margin: 0; padding: 0; }
.defs { position: absolute; width: 0; height: 0; overflow: hidden; }
.window { flex: 1; min-height: 0; display: flex; flex-direction: column; }
.i16 { width: 16px; height: 16px; }
.i14 { width: 14px; height: 14px; margin-right: 7px; }

.titlebar { height: 20px; display: flex; align-items: center; gap: 4px; padding-left: 1px; background: #fff; }
.title { font: inherit; flex: 1; padding-top: 1px; }
.winctl { display: flex; }
.winctl button { width: 43px; height: 20px; display: grid; place-items: center; }
.winctl button:last-child { width: 47px; }
.winctl svg { width: 10px; height: 10px; }

.menubar { height: 22px; display: flex; align-items: center; padding: 0 2px 0 7px; background: #fff; border-bottom: 1px solid #a5a5a5; }
.menubar > button { margin-right: 12px; }
.mdictl { margin-left: auto; display: flex; gap: 3px; }
.mdictl button { width: 15px; height: 13px; display: grid; place-items: center; background: #f0f0f0; }
.mdictl svg { width: 9px; height: 9px; }

.bar { display: flex; align-items: center; width: fit-content; height: 28px; padding: 0 6px 0 7px; border-right: 1px solid #999; }
.bar::before { content: ""; width: 1px; height: 22px; margin: 0 8px 0 -3px; background: #aaa; }
.bar-a { padding-right: 1px; height: 27px; }
.bar-a::before { margin-right: 7px; }
.bar-b { border-top: 1px solid #b8b8b8; border-bottom: 1px solid #b8b8b8; margin-top: -1px; height: 29px; }
.bars { flex: none; display: grid; box-shadow: inset 0 -1px #888; }
.bar-c { height: 28px; padding-right: 11px; background: #f8f8f0; }
.bar-c::before { visibility: hidden; margin-right: 6px; }
.prompt { display: flex; height: 22px; border-top: 2px solid #c9c9c9; border-bottom: 1px solid #888; }
.prompt i { width: 77.4%; border-right: 1px solid #ccc; }
.tb { width: 22px; height: 21px; display: grid; place-items: center; flex: none; }
.tb svg { width: 16px; height: 16px; }
.tb.on { background: #f5b56b; border: 1px solid #3c2f20; }
.tb.box { background: #e3e9f0; border: 1px solid #75808c; border-radius: 2px; }
.tb.hot { background: #f9d9b4; }
.space { width: 12px; }
.sep { width: 1px; height: 17px; margin: 0 2px; background: #8c8c8c; }
.dd { width: 13px; height: 21px; display: grid; place-items: center; flex: none; }
.dd::before { content: ""; border: 3px solid transparent; border-top: 4px solid #111; border-bottom: 0; }
.dd.off::before { border-top-color: #777; }
.dd.lit { background: #b9d9f4; }

.work { flex: 1; min-height: 0; display: flex; border-bottom: 2px solid #e4e4e4; }
.finder { width: 198px; flex: none; display: flex; flex-direction: column; padding: 3px 1px 2px 3px; }
.grip-row { display: flex; align-items: center; gap: 4px; height: 11px; }
.grip { flex: 1; height: 5px; border: 1px solid #aaa; border-left: 0; background: #fff; }
.grip-row button { width: 11px; height: 11px; display: grid; place-items: center; background: #d8d8d8; border: 1px solid #666; }
.grip-row button svg { width: 6px; height: 6px; }
.tabs { display: flex; height: 31px; padding-top: 5px; align-items: flex-end; }
.tabs button { width: 27px; height: 25px; display: grid; place-items: center; border-right: 2px solid #777; border-top: 1px solid #fff; }
.tabs .cur { width: 28px; height: 28px; border-left: 1px solid #fff; }
.tabs svg { width: 19px; height: 19px; }
.page { flex: 1; min-height: 0; padding: 4px 3px; border: 1px solid #fff; border-right: 2px solid #777; border-bottom: 2px solid #777; }
.treebox { height: 100%; padding-top: 1px; background: #fff; border: 1px solid #777; font: 10px/15px "Liberation Sans", Arial, sans-serif; overflow: hidden; }
.root { display: flex; align-items: center; gap: 4px; padding-left: 3px; height: 15px; }
.root svg { width: 14px; height: 14px; margin-right: 1px; }
.treebox ul { list-style: none; margin-left: 11px; padding-left: 0; background: repeating-linear-gradient(#888 0 1px, transparent 1px 2px) 0 0 / 1px 143px no-repeat; }
.treebox li { display: flex; align-items: center; gap: 5px; height: 15px; padding-left: 24px; background: repeating-linear-gradient(90deg, #888 0 1px, transparent 1px 2px) 0 7px / 10px 1px no-repeat; }
.treebox li svg { width: 14px; height: 14px; }

.tools { flex: none; display: flex; align-items: stretch; margin-left: 4px; border-left: 1px solid #aaa; }
.col { align-self: flex-start; display: flex; flex-direction: column; border-right: 1px solid #aaa; border-bottom: 1px solid #aaa; padding: 3px 0 4px 3px; }
.col > div { display: flex; height: 21px; align-items: center; }
.col hr { width: 32px; height: 1px; margin: 1px 2px 2px; border: 0; background: #999; }
.vgrip { width: 35px; height: 3px; border: 1px solid #aaa; border-left: 0; background: #fff; margin-bottom: 6px; }
.col-1 { width: 42px; }
.col-1 .dd { margin-left: -1px; }
.tick { width: 1px; height: 16px; margin-left: 3px; background: #aaa; }
.col-2 { width: 43px; margin-top: 13px; border-top: 1px solid #ccc; border-right: 0; padding-top: 4px; padding-left: 4px; }
.col-2 hr { margin: 2px 2px 2px; }

.view { flex: 1; min-width: 0; border: 1px solid #777; border-width: 0 0 0 1px; margin-right: 1px; background: linear-gradient(#62bcff, #a5d6fa 48%, #cfe4f1 78%, #efedee); overflow: hidden; }
.scene { width: 100%; height: 100%; }
.axis { font: 14px "Liberation Sans", Arial, sans-serif; }

.taskbar { height: 45px; flex: none; display: grid; grid-template-columns: 1fr auto 1fr; align-items: center; color: #f4f4f4; background: linear-gradient(90deg, #1b212b, #1a2333 13%, #12245a 20%, #111f60 50%, #1d2340 66%, #1b212b 78%); }
.weather { justify-self: start; display: flex; align-items: center; gap: 8px; padding-left: 19px; text-align: left; }
.weather svg { width: 21px; height: 19px; }
.weather b, .weather em { display: block; font-weight: normal; font-style: normal; }
.weather em { color: #c4c7cc; }
.apps { display: flex; gap: 5px; }
.apps button { position: relative; width: 36px; height: 37px; display: grid; place-items: center; border-radius: 3px; }
.apps svg { width: 22px; height: 22px; }
.apps .cur { background: #252d4b; }
.run::after { content: ""; position: absolute; left: 15px; bottom: 0; width: 6px; height: 3px; border-radius: 2px; background: #9a9fc0; }
.run.cur::after { left: 11px; width: 14px; background: #5bbcf0; }
.badge { position: absolute; left: 20px; top: 2px; width: 15px; height: 15px; border-radius: 50%; background: #d9121b; color: #fff; font: 10px/15px "Liberation Sans", Arial, sans-serif; text-align: center; }
.tray { justify-self: end; display: flex; align-items: center; padding-right: 17px; }
.tray button { margin-right: 11px; }
.tray svg { width: 15px; height: 15px; }
.tray .chev { margin-right: 9px; }
.tray .mic { margin-right: 15px; }
.chev svg { width: 12px; height: 12px; }
.status { display: flex; gap: 7px; }
.tray .clock { margin-left: 2px; margin-right: 5px; text-align: right; }
.clock time { display: block; }
.count { width: 19px; height: 19px; border-radius: 50%; background: #4cb8ee; color: #123; font-size: 10px; line-height: 19px; text-align: center; }
```
